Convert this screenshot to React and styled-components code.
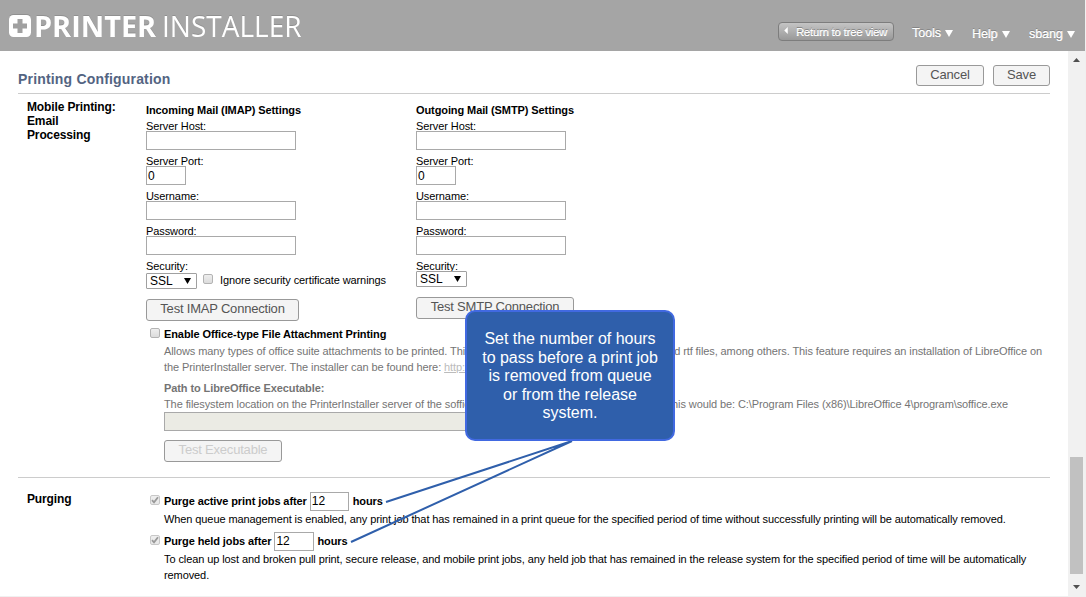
import React from 'react';
import styled, { createGlobalStyle } from 'styled-components';

const Global = createGlobalStyle`
  * { box-sizing: border-box; }
  body { margin: 0; background: #fff; overflow: hidden; }
  input, button { font-family: "Liberation Sans", Arial, sans-serif; }
`;

const Page = styled.div`
  position: relative;
  display: flex;
  flex-direction: column;
  width: 1086px;
  height: 597px;
  overflow: hidden;
  border-right: 1px solid #f0f0f0;
  border-bottom: 1px solid #f0f0f0;
  font: 11px/16px "Liberation Sans", Arial, sans-serif;
  letter-spacing: -0.095px;
  color: #000;
  white-space: nowrap;
`;

const Header = styled.header`
  display: flex;
  justify-content: space-between;
  flex: none;
  height: 51px;
  padding: 0 10px 0 9px;
  background: #a5a5a5;
  color: #fff;
  letter-spacing: 0;
`;

const Brand = styled.div`
  display: flex;
  align-items: flex-start;
  padding-top: 15px;
  svg { display: block; filter: drop-shadow(0 -1px 0 #909090); }
`;

const BrandWord = styled.span`
  width: ${p => p.$w}px;
  margin-left: ${p => p.$gap}px;
  font: ${p => p.$weight} 29px/22px "Open Sans", "Noto Sans", sans-serif;
  text-shadow: 0 -1px 0 #909090;
  transform: scaleX(${p => p.$squeeze});
  transform-origin: 0 0;
`;

const Nav = styled.nav`
  display: flex;
  align-items: flex-start;
  padding-top: 22px;
`;

const TreeButton = styled.button`
  display: flex;
  align-items: center;
  width: 116px;
  height: 19px;
  margin-right: 18px;
  padding: 0 0 0 5px;
  border: 1px solid #7d7d7d;
  border-radius: 4px;
  background: linear-gradient(#c4c4c4, #999);
  color: #fff;
  font-size: 11px;
  letter-spacing: -0.07px;
  text-shadow: 0 -1px 0 #808080, 0.4px 0 0 #fff;
  white-space: nowrap;
  svg { margin: 0 8px 2px 0; }
`;

const MenuItem = styled.span`
  display: flex;
  align-items: center;
  justify-content: space-between;
  width: ${p => p.$w}px;
  margin: ${p => p.$drop}px 0 0 ${p => p.$gap}px;
  font-size: 12.4px;
  line-height: 16px;
  text-shadow: 0 -1px 0 #858585, 0.3px 0 0 #fff;
`;

const Body = styled.div`
  display: flex;
  flex: 1;
  min-height: 0;
`;

const Content = styled.main`
  flex: 1;
  padding: 0 18px;
`;

const TitleBar = styled.div`
  display: flex;
  justify-content: space-between;
  height: 43px;
  padding-top: 14px;
  border-bottom: 1px solid #ccc;
`;

const Title = styled.h1`
  margin: 6px 0 0;
  font-size: 14px;
  line-height: 16px;
  letter-spacing: 0.18px;
  color: #536482;
`;

const Actions = styled.div`
  display: flex;
  gap: 9px;
`;

const Button = styled.button`
  display: block;
  width: ${p => p.$w}px;
  height: ${p => p.$h || 22}px;
  margin: ${p => p.$mt || 0}px 0 0;
  padding: 0 0 ${p => (p.$h ? 1 : 3)}px;
  border: 1px solid #999;
  border-radius: 3px;
  background: #f4f4f4;
  color: ${p => (p.disabled ? '#ccc' : '#555')};
  font-size: 13px;
  line-height: 16px;
  letter-spacing: -0.2px;
  white-space: nowrap;
`;

const Section = styled.section`
  display: flex;
  height: ${p => p.$h}px;
  padding-left: 9px;
  border-bottom: ${p => (p.$ruled ? '1px solid #ccc' : 'none')};
`;

const SectionLabel = styled.h2`
  width: 119px;
  margin: 0;
  padding-top: ${p => p.$top}px;
  font-size: 12px;
  line-height: 14px;
  letter-spacing: -0.13px;
`;

const SectionBody = styled.div`
  flex: 1;
  padding-top: ${p => p.$top}px;
`;

const Columns = styled.div`
  display: flex;
  height: 224px;
`;

const Column = styled.div`
  width: 270px;
`;

const Heading = styled.h3`
  margin: 0;
  font-size: 11px;
  line-height: 16px;
`;

const Field = styled.label`
  display: block;
  height: 35px;
  line-height: 14px;
  padding-top: 1px;
`;

const Input = styled.input`
  display: block;
  width: ${p => p.$w}px;
  height: 19px;
  margin: -2px 0 0;
  padding: 0 1px;
  border: 1px solid #a9a9a9;
  background: #fff;
  color: #000;
  font-size: 12px;
`;

const PathInput = styled(Input)`
  margin: 0;
  background: #ebebe4;
`;

const HoursInput = styled(Input)`
  margin: 1px ${p => p.$after}px 0 3px;
  padding-bottom: 2px;
`;

const SecurityLabel = styled.div`
  height: 13px;
`;

const SecurityRow = styled.div`
  display: flex;
  align-items: flex-start;
  height: ${p => 26 + p.$top}px;
  padding-top: ${p => p.$top}px;
  line-height: 14px;
`;

const Select = styled.div`
  display: flex;
  align-items: center;
  justify-content: space-between;
  width: 51px;
  height: 16px;
  padding: 0 5px 0 3px;
  border: 1px solid #a0a0a0;
  border-radius: 1px;
  font-size: 12px;
  line-height: 14px;
  letter-spacing: 0;
`;

const Box = styled.span`
  display: flex;
  flex: none;
  align-items: center;
  justify-content: center;
  width: 10px;
  height: 10px;
  margin: ${p => p.$m || '0 4px 2px 0'};
  border: 1px solid ${p => (p.$dim ? '#c8c8c8' : '#b3b3b3')};
  border-radius: 2px;
  background: linear-gradient(#eee, ${p => (p.$dim ? '#e8e8e8' : '#dcdcdc')});
`;

const CheckLine = styled.div`
  display: flex;
  align-items: center;
  height: ${p => p.$h}px;
  margin-top: ${p => p.$mt || 0}px;
  padding-left: 4px;
  font-weight: bold;
`;

const Indent = styled.div`
  padding-left: 18px;
  color: ${p => (p.$muted ? '#747474' : '#000')};
`;

const Line = styled.div`
  display: flex;
  justify-content: space-between;
  width: ${p => (p.$w ? `${p.$w}px` : 'auto')};
  height: 16px;
  margin-top: ${p => p.$mt || 0}px;
  font-weight: ${p => (p.$bold ? 'bold' : 'normal')};
  a { color: #bbb; text-decoration: underline; }
`;

const Scrollbar = styled.div`
  display: flex;
  flex-direction: column;
  align-items: center;
  width: 17px;
  padding: 7px 0 7px;
  background: #f1f1f1;
`;

const Thumb = styled.div`
  width: 13px;
  height: 117px;
  margin: auto 0 11px;
  background: #c1c1c1;
`;

const Pointers = styled.svg`
  position: absolute;
  left: 0;
  top: 0;
  pointer-events: none;
`;

const Callout = styled.div`
  position: absolute;
  left: 465px;
  top: 310px;
  width: 210px;
  height: 131px;
  padding-top: 18px;
  border: 2px solid #4169e1;
  border-radius: 10px;
  background: #2f5fab;
  color: #fff;
  font-size: 16px;
  line-height: 18.6px;
  letter-spacing: -0.02px;
  text-align: center;
`;

const Triangle = ({ w, h, up, color = '#fff' }) => (
  <svg width={w} height={h} viewBox="0 0 8 8" preserveAspectRatio="none">
    <path d={up ? 'M0 8L4 0L8 8Z' : 'M0 0H8L4 8Z'} fill={color} />
  </svg>
);

const Check = () => (
  <svg width="8" height="8" viewBox="0 0 8 8">
    <path d="M1 4.2L3 6.3L7 1.2" fill="none" stroke="#999" strokeWidth="1.8" />
  </svg>
);

const MailFields = () => (
  <>
    <Field>Server Host:<Input $w={150} /></Field>
    <Field>Server Port:<Input $w={40} defaultValue="0" /></Field>
    <Field>Username:<Input $w={150} /></Field>
    <Field>Password:<Input $w={150} /></Field>
  </>
);

const Security = ({ top, children }) => (
  <>
    <SecurityLabel>Security:</SecurityLabel>
    <SecurityRow $top={top}>
      <Select>SSL <Triangle w={7} h={6} color="#000" /></Select>
      {children}
    </SecurityRow>
  </>
);

export default function App() {
  return (
    <>
      <Global />
      <Page>
        <Header>
          <Brand>
            <svg width="22" height="22" viewBox="0 0 22 22">
              <rect width="22" height="22" rx="4.5" fill="#fff" />
              <path d="M8.500 4h5v4.500h4.500v5h-4.500v4.500h-5v-4.500h-4.500v-5h4.500z" fill="#a0a0a0" />
            </svg>
            <BrandWord $w={120} $gap={3} $weight={700} $squeeze={0.995}>PRINTER</BrandWord>
            <BrandWord $w={140} $gap={7.5} $weight={400} $squeeze={0.966}>INSTALLER</BrandWord>
          </Brand>
          <Nav>
            <TreeButton>
              <svg width="4" height="7" viewBox="0 0 4 8"><path d="M4 0V8L0 4Z" fill="#fff" /></svg>
              Return to tree view
            </TreeButton>
            <MenuItem $w={41} $gap={0} $drop={3}>Tools <Triangle w={8} h={7} /></MenuItem>
            <MenuItem $w={38} $gap={19} $drop={4}>Help <Triangle w={8} h={7} /></MenuItem>
            <MenuItem $w={46} $gap={19} $drop={4}>sbang <Triangle w={8} h={7} /></MenuItem>
          </Nav>
        </Header>
        <Body>
          <Content>
            <TitleBar>
              <Title>Printing Configuration</Title>
              <Actions>
                <Button $w={68} $h={21}>Cancel</Button>
                <Button $w={57} $h={21}>Save</Button>
              </Actions>
            </TitleBar>
            <Section $h={384} $ruled>
              <SectionLabel $top={6}>Mobile Printing:<br />Email<br />Processing</SectionLabel>
              <SectionBody $top={8}>
                <Columns>
                  <Column>
                    <Heading>Incoming Mail (IMAP) Settings</Heading>
                    <MailFields />
                    <Security top={2}>
                      <Box $m="1px 7px 0 6px" />
                      Ignore security certificate warnings
                    </Security>
                    <Button $w={153}>Test IMAP Connection</Button>
                  </Column>
                  <Column>
                    <Heading>Outgoing Mail (SMTP) Settings</Heading>
                    <MailFields />
                    <Security top={0} />
                    <Button $w={158}>Test SMTP Connection</Button>
                  </Column>
                </Columns>
                <CheckLine $h={16}>
                  <Box />
                  Enable Office-type File Attachment Printing
                </CheckLine>
                <Indent $muted>
                  <Line $w={878} $mt={1}>
                    <span>Allows many types of office suite attachments to be printed. This</span>
                    <span>and rtf files, among others. This feature requires an installation of LibreOffice on</span>
                  </Line>
                  <Line>
                    <span>the PrinterInstaller server. The installer can be found here: <a>http://</a></span>
                  </Line>
                  <Line $mt={5} $bold>Path to LibreOffice Executable:</Line>
                  <Line $w={844}>
                    <span>The filesystem location on the PrinterInstaller server of the soffice</span>
                    <span>this would be: C:\Program Files (x86)\LibreOffice 4\program\soffice.exe</span>
                  </Line>
                  <PathInput $w={400} disabled />
                  <Button $w={118} $mt={9} disabled>Test Executable</Button>
                </Indent>
              </SectionBody>
            </Section>
            <Section $h={118}>
              <SectionLabel $top={14}>Purging</SectionLabel>
              <SectionBody $top={13}>
                <CheckLine $h={20}>
                  <Box $dim><Check /></Box>
                  Purge active print jobs after
                  <HoursInput $w={39} $after={4} defaultValue="12" />
                  hours
                </CheckLine>
                <Indent>
                  <Line>When queue management is enabled, any print job that has remained in a print queue for the specified period of time without successfully printing will be automatically removed.</Line>
                </Indent>
                <CheckLine $h={20} $mt={4}>
                  <Box $dim><Check /></Box>
                  Purge held jobs after
                  <HoursInput $w={40} $after={3} defaultValue="12" />
                  hours
                </CheckLine>
                <Indent>
                  <Line>To clean up lost and broken pull print, secure release, and mobile print jobs, any held job that has remained in the release system for the specified period of time will be automatically</Line>
                  <Line>removed.</Line>
                </Indent>
              </SectionBody>
            </Section>
          </Content>
          <Scrollbar>
            <Triangle w={7} h={4} up color="#505050" />
            <Thumb />
            <Triangle w={7} h={4} color="#505050" />
          </Scrollbar>
        </Body>
        <Pointers width="1086" height="597">
          <path d="M572 441L386 502M572 441L351 542" stroke="#2f5fab" strokeWidth="2" fill="none" />
        </Pointers>
        <Callout>
          Set the number of hours<br />to pass before a print job<br />is removed from queue<br />or from the release<br />system.
        </Callout>
      </Page>
    </>
  );
}
